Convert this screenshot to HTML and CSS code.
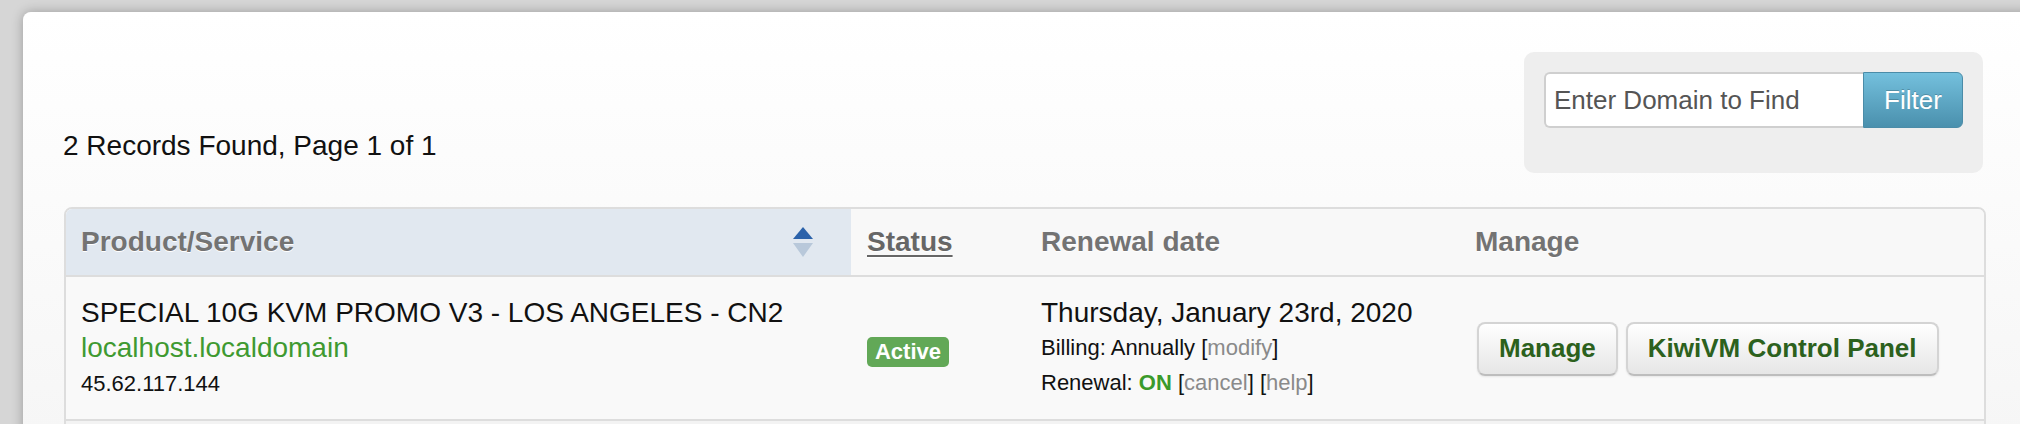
FILE: index.html
```html
<!DOCTYPE html>
<html lang="en">
<head>
<meta charset="utf-8">
<title>Services</title>
<link rel="stylesheet" href="styles.css">
</head>
<body>
<div class="card">
  <div class="top">
    <div class="records">2 Records Found, Page 1 of 1</div>
    <form class="filter">
      <input class="filter-input" type="text" placeholder="Enter Domain to Find">
      <button class="filter-btn" type="button">Filter</button>
    </form>
  </div>
  <div class="table">
    <div class="row head">
      <div class="cell sorted"><span>Product/Service</span>
        <svg class="sort" width="20" height="30" viewBox="0 0 20 30"><path d="M10 0 L20 12 L0 12 Z" fill="#2b62aa"/><path d="M0 16 L20 16 L10 30 Z" fill="#b8c8da"/></svg>
      </div>
      <div class="cell"><span class="ulink">Status</span></div>
      <div class="cell">Renewal date</div>
      <div class="cell">Manage</div>
    </div>
    <div class="row body">
      <div class="cell product">
        <div class="l1">SPECIAL 10G KVM PROMO V3 - LOS ANGELES - CN2</div>
        <div class="l1 domain">localhost.localdomain</div>
        <div class="l2">45.62.117.144</div>
      </div>
      <div class="cell status"><span class="badge">Active</span></div>
      <div class="cell renew">
        <div class="l1">Thursday, January 23rd, 2020</div>
        <div class="l2">Billing: Annually [<span class="mute">modify</span>]</div>
        <div class="l2">Renewal: <b class="on">ON</b> [<span class="mute">cancel</span>] [<span class="mute">help</span>]</div>
      </div>
      <div class="cell manage">
        <button class="btn" type="button">Manage</button>
        <button class="btn" type="button">KiwiVM Control Panel</button>
      </div>
    </div>
    <div class="row body empty"></div>
  </div>
</div>
</body>
</html>
```

FILE: styles.css
```css
html, body {
  margin: 0;
  padding: 0;
}
body {
  background: #d6d6d6;
  font-family: "Liberation Sans", Arial, sans-serif;
  color: #111;
  overflow: hidden;
  height: 424px;
}
.card {
  margin: 12px 0 0 23px;
  width: 2040px;
  height: 600px;
  border-radius: 8px 0 0 0;
  background: linear-gradient(#ffffff, #f6f6f6 420px);
  box-shadow: 0 0 12px rgba(0,0,0,0.28);
  padding: 40px 0 0 41px;
  box-sizing: border-box;
}
.top {
  width: 1919px;
  display: flex;
  justify-content: space-between;
  align-items: flex-start;
}
.records {
  margin-top: 74px;
  margin-left: -1px;
  font-size: 28px;
  line-height: 40px;
  color: #111;
}
.filter {
  margin: 0;
  width: 459px;
  height: 121px;
  box-sizing: border-box;
  background: #eeeeee;
  border-radius: 10px;
  padding: 20px 20px 0 20px;
  display: flex;
  align-items: flex-start;
}
.filter-input {
  width: 319px;
  height: 56px;
  box-sizing: border-box;
  border: 2px solid #cfcfcf;
  border-right: none;
  border-radius: 6px 0 0 6px;
  padding: 0 8px;
  font-family: "Liberation Sans", Arial, sans-serif;
  font-size: 26px;
  color: #555;
  background: #fff;
  outline: none;
}
.filter-input::placeholder {
  color: #555;
}
.filter-btn {
  width: 100px;
  height: 56px;
  box-sizing: border-box;
  border: 1px solid #4b8ca8;
  border-radius: 0 6px 6px 0;
  background: linear-gradient(#74c0dd, #4a90ad);
  color: #fff;
  font-family: "Liberation Sans", Arial, sans-serif;
  font-size: 26px;
  text-shadow: 0 -1px 0 rgba(0,0,0,0.2);
  padding: 0;
}
.table {
  margin-top: 34px;
  width: 1918px;
  border: 2px solid #dddddd;
  border-radius: 8px;
  overflow: hidden;
  background: #f9f9f9;
}
.row {
  display: grid;
  grid-template-columns: 785px 174px 434px 521px;
  border-bottom: 2px solid #dddddd;
}
.head {
  background: #f8f8f8;
  height: 66px;
}
.head .cell {
  padding: 13px 16px 13px;
  font-size: 28px;
  font-weight: bold;
  line-height: 40px;
  color: #737373;
  text-shadow: 0 1px 0 #fff;
}
.head .sorted {
  background: #e1e8f0;
  display: flex;
  justify-content: space-between;
  align-items: center;
  padding-left: 15px;
  padding-right: 38px;
}
.sort {
  display: block;
}
.ulink {
  text-decoration: underline;
  text-decoration-thickness: 2px;
  text-underline-offset: 4px;
  color: #666;
}
.body .cell {
  padding: 18px 16px 17px;
}
.body .product {
  padding-left: 15px;
}
.l1 {
  font-size: 28px;
  line-height: 35px;
  color: #111;
}
.l2 {
  font-size: 22px;
  line-height: 35px;
  color: #111;
}
.domain {
  color: #3f9a31;
}
.product .l2 {
  line-height: 37px;
}
.status {
  display: flex;
  align-items: center;
}
.badge {
  display: inline-block;
  margin-top: 6px;
  width: 82px;
  height: 30px;
  line-height: 30px;
  text-align: center;
  background: #62a857;
  color: #fff;
  font-size: 22px;
  font-weight: bold;
  border-radius: 5px;
}
.mute {
  color: #8a8a8a;
}
.on {
  color: #3a9a2b;
}
.manage {
  display: flex;
  align-items: center;
  gap: 8px;
}
.btn {
  margin-left: 2px;
  height: 54px;
  box-sizing: border-box;
  padding: 0 20px;
  border: 2px solid #d4d4d4;
  border-bottom-color: #bdbdbd;
  border-radius: 8px;
  background: linear-gradient(#ffffff, #e6e6e6);
  box-shadow: 0 1px 2px rgba(0,0,0,0.08);
  color: #2c611d;
  font-family: "Liberation Sans", Arial, sans-serif;
  font-size: 26px;
  font-weight: bold;
}
.btn + .btn {
  margin-left: 0;
}
.empty {
  height: 140px;
  background: #f3f3f3;
}
```
